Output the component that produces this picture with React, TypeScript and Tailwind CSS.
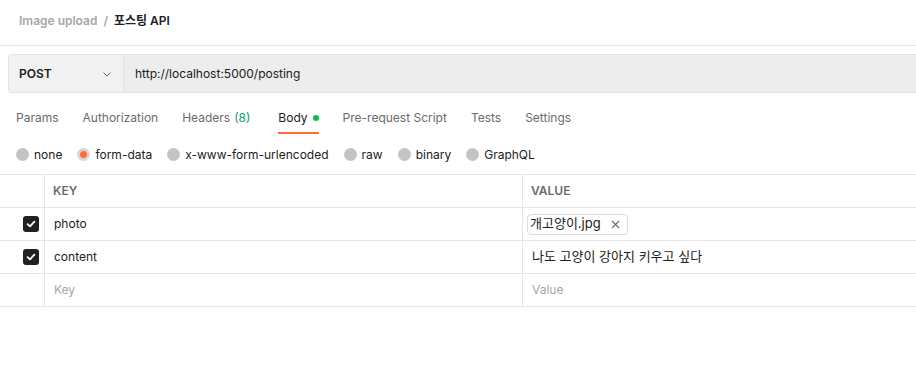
import React from "react";

const tabs = ["Params", "Authorization", "Headers", "Body", "Pre-request Script", "Tests", "Settings"];
const bodyTypes = ["none", "form-data", "x-www-form-urlencoded", "raw", "binary", "GraphQL"];

function Check() {
  return (
    <div className="w-4 h-4 rounded-[3px] bg-[#212121] flex items-center justify-center">
      <svg width="10" height="10" viewBox="0 0 10 10" fill="none">
        <path d="M1.6 5.2 L4 7.4 L8.4 2.6" stroke="white" strokeWidth="1.8" strokeLinecap="round" strokeLinejoin="round" />
      </svg>
    </div>
  );
}

export default function App() {
  return (
    <div
      className="w-[916px] h-[385px] bg-white text-[12px] text-[#212121] overflow-hidden"
      style={{ fontFamily: 'Inter, "Noto Sans CJK KR", sans-serif' }}
    >
      {/* breadcrumb */}
      <div className="h-[46px] border-b border-[#e6e6e6] flex items-center pb-[4px] pl-[19px] font-semibold">
        <span className="text-[#a6a6a6]">Image upload</span>
        <span className="text-[#a6a6a6] mx-[6px]">/</span>
        <span className="text-[#212121]">포스팅 API</span>
      </div>

      {/* url bar */}
      <div className="pl-2 mt-2">
        <div className="h-[39px] flex border border-r-0 border-[#e3e3e3] rounded-l-[4px] overflow-hidden">
          <div className="w-[115px] bg-[#f2f2f2] border-r border-[#e3e3e3] flex items-center justify-between pl-[10px] pr-[10px]">
            <span className="font-semibold">POST</span>
            <svg width="12" height="12" viewBox="0 0 12 12" fill="none">
              <path d="M2.5 4.5 L6 8 L9.5 4.5" stroke="#6b6b6b" strokeWidth="1" />
            </svg>
          </div>
          <div className="flex-1 bg-[#ededed] flex items-center pl-[11px]">http://localhost:5000/posting</div>
        </div>
      </div>

      {/* tabs */}
      <div className="mt-2 h-[33px] flex gap-6 pl-4 pt-[2px]">
        {tabs.map((t) => (
          <div
            key={t}
            className={
              t === "Body"
                ? "flex items-center border-b-2 border-[#ff6c37] text-[#212121]"
                : "flex items-center border-b-2 border-transparent text-[#6b6b6b]"
            }
          >
            {t}
            {t === "Headers" && <span className="ml-[4px] mr-[4px] text-[#0a9a6e]">(8)</span>}
            {t === "Body" && <span className="ml-[5px] w-[6px] h-[6px] rounded-full bg-[#0cbb52]" />}
          </div>
        ))}
      </div>

      {/* body types */}
      <div className="h-[40px] flex items-center gap-[15px] pl-4 pt-[1px]">
        {bodyTypes.map((b) => (
          <div key={b} className="flex items-center gap-[5px] text-[#212121]">
            {b === "form-data" ? (
              <span className="w-[13px] h-[13px] rounded-full bg-[#d6d6d6] flex items-center justify-center">
                <span className="w-[7px] h-[7px] rounded-full bg-[#ff6c37]" />
              </span>
            ) : (
              <span className="w-[13px] h-[13px] rounded-full bg-[#c4c4c4]" />
            )}
            {b}
          </div>
        ))}
      </div>

      {/* table */}
      <div className="border-t border-[#e6e6e6]">
        <div className="flex h-[33px] border-b border-[#e6e6e6] font-semibold text-[#6b6b6b]">
          <div className="w-[45px] border-r border-[#e6e6e6]" />
          <div className="w-[478px] border-r border-[#e6e6e6] flex items-center pl-2">KEY</div>
          <div className="flex-1 flex items-center pl-2">VALUE</div>
        </div>
        <div className="flex h-[33px] border-b border-[#e6e6e6]">
          <div className="w-[45px] border-r border-[#e6e6e6] flex items-center pl-[23px]">
            <Check />
          </div>
          <div className="w-[478px] border-r border-[#e6e6e6] flex items-center pl-[9px]">photo</div>
          <div className="flex-1 flex items-center pl-[4px]">
            <div className="h-[21px] flex items-center gap-[10px] border border-[#dcdcdc] rounded-[4px] pl-[2px] pr-[7px] text-[13px]">
              <span>개고양이.jpg</span>
              <svg width="9" height="9" viewBox="0 0 9 9" fill="none">
                <path d="M1 1 L8 8 M8 1 L1 8" stroke="#6b6b6b" strokeWidth="1.1" />
              </svg>
            </div>
          </div>
        </div>
        <div className="flex h-[33px] border-b border-[#e6e6e6]">
          <div className="w-[45px] border-r border-[#e6e6e6] flex items-center pl-[23px]">
            <Check />
          </div>
          <div className="w-[478px] border-r border-[#e6e6e6] flex items-center pl-[9px]">content</div>
          <div className="flex-1 flex items-center pl-[9px] text-[13px]">나도 고양이 강아지 키우고 싶다</div>
        </div>
        <div className="flex h-[33px] border-b border-[#e6e6e6] text-[#a6a6a6]">
          <div className="w-[45px] border-r border-[#e6e6e6]" />
          <div className="w-[478px] border-r border-[#e6e6e6] flex items-center pl-[9px]">Key</div>
          <div className="flex-1 flex items-center pl-[9px]">Value</div>
        </div>
      </div>
    </div>
  );
}
